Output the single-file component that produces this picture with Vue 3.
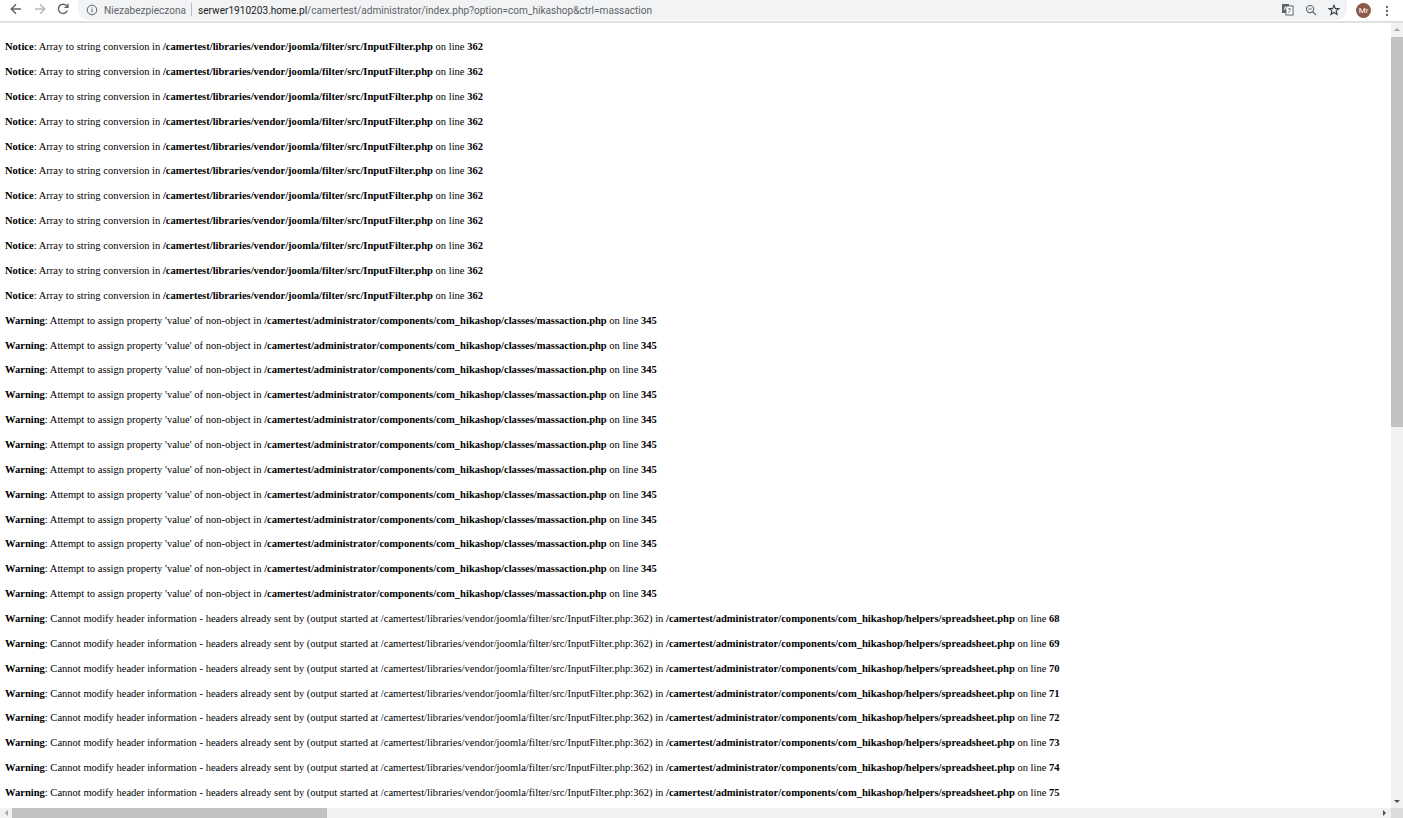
<script setup>
const notices = Array.from({ length: 11 }, (_, i) => i)
const warnings = Array.from({ length: 12 }, (_, i) => i)
const headerLines = [68, 69, 70, 71, 72, 73, 74, 75]
</script>

<template>
  <div class="window">
    <header class="toolbar">
      <div class="nav">
        <svg width="14" height="14" viewBox="0 0 14 14" class="ic"><path d="M12 7H2.5M7 2.2 2.2 7 7 11.8" fill="none" stroke="#5f6368" stroke-width="1.4"/></svg>
        <svg width="14" height="14" viewBox="0 0 14 14" class="ic"><path d="M2 7h9.5M7 2.2 11.8 7 7 11.8" fill="none" stroke="#b4b6b9" stroke-width="1.4"/></svg>
        <svg width="14" height="14" viewBox="0 0 14 14" class="ic"><path d="M11.3 8.6A4.6 4.6 0 1 1 10.6 3.9L12 5.2M12 1.8v3.6H8.4" fill="none" stroke="#5f6368" stroke-width="1.4"/></svg>
      </div>
      <div class="omnibox">
        <svg class="info" width="12" height="12" viewBox="0 0 12 12"><circle cx="6" cy="6" r="4.8" fill="none" stroke="#5f6368" stroke-width="1"/><path d="M6 5.2v3.2M6 3.4v1" stroke="#5f6368" stroke-width="1"/></svg>
        <span class="insecure">Niezabezpieczona</span>
        <span class="sep"></span>
        <span class="url"><span class="host">serwer1910203.home.pl</span>/camertest/administrator/index.php?option=com_hikashop&amp;ctrl=massaction</span>
        <span class="spacer"></span>
        <svg class="omni-ic" width="13" height="13" viewBox="0 0 13 13"><rect x="1" y="1" width="7" height="9" fill="#5f6368"/><rect x="5" y="3" width="7" height="9" fill="#fff" stroke="#5f6368"/><path d="M7 6h3M8.5 5v1M7.3 10l2.4-3" stroke="#5f6368" stroke-width=".8" fill="none"/><path d="M3 7l1.3-3.4L5.5 7" stroke="#fff" stroke-width=".8" fill="none"/></svg>
        <svg class="omni-ic" width="12" height="12" viewBox="0 0 13 13"><circle cx="5.5" cy="5.5" r="3.9" fill="none" stroke="#5f6368" stroke-width="1.2"/><path d="M8.4 8.4 12 12" stroke="#5f6368" stroke-width="1.3"/><path d="M3.6 5.5h3.8" stroke="#5f6368"/></svg>
        <svg class="omni-ic" width="12" height="12" viewBox="0 0 13 13"><path d="M6.5 1.4 8 5h3.8L8.8 7.5l1.1 3.9-3.4-2.2-3.4 2.2 1.1-3.9L1.2 5H5z" fill="none" stroke="#3c4043" stroke-width="1.2"/></svg>
      </div>
      <span class="avatar">Mr</span>
      <svg class="menu" width="4" height="12" viewBox="0 0 4 12"><circle cx="2" cy="2" r="1.15" fill="#5f6368"/><circle cx="2" cy="6" r="1.15" fill="#5f6368"/><circle cx="2" cy="10" r="1.15" fill="#5f6368"/></svg>
    </header>

    <div class="middle">
      <main class="page">
        <div v-for="n in notices" :key="'n' + n" class="line"><b>Notice</b>: Array to string conversion in <b>/camertest/libraries/vendor/joomla/filter/src/InputFilter.php</b> on line <b>362</b></div>
        <div v-for="w in warnings" :key="'w' + w" class="line"><b>Warning</b>: Attempt to assign property 'value' of non-object in <b>/camertest/administrator/components/com_hikashop/classes/massaction.php</b> on line <b>345</b></div>
        <div v-for="l in headerLines" :key="'h' + l" class="line"><b>Warning</b>: Cannot modify header information - headers already sent by (output started at /camertest/libraries/vendor/joomla/filter/src/InputFilter.php:362) in <b>/camertest/administrator/components/com_hikashop/helpers/spreadsheet.php</b> on line <b>{{ l }}</b></div>
      </main>
      <aside class="vscroll">
        <span class="arrow up"></span>
        <span class="vthumb"></span>
        <span class="vrest"></span>
        <span class="arrow down"></span>
      </aside>
    </div>

    <footer class="hbar">
      <div class="hscroll">
        <span class="arrow left"></span>
        <span class="hthumb"></span>
        <span class="hrest"></span>
        <span class="arrow right"></span>
      </div>
      <span class="corner"></span>
    </footer>
  </div>
</template>

<style>
html, body { margin: 0; overflow: hidden; background: #fff; }
</style>

<style scoped>
.window {
  width: 1403px;
  height: 818px;
  display: flex;
  flex-direction: column;
  overflow: hidden;
  background: #fff;
}
.toolbar {
  height: 21px;
  flex: none;
  display: flex;
  align-items: center;
  background: #fff;
  border-bottom: 2px solid #dfe0e1;
  font-family: "Roboto", "Liberation Sans", sans-serif;
  font-size: 10.1px;
  color: #5f6368;
}
.nav {
  display: flex;
  gap: 9.5px;
  padding-left: 9px;
  width: 71px;
  box-sizing: border-box;
  flex: none;
  margin-top: -3px;
}
.omnibox {
  width: 1269px;
  height: 21px;
  margin-top: -2px;
  box-sizing: border-box;
  flex: none;
  display: flex;
  align-items: center;
  background: #f1f3f4;
  border-radius: 0 0 11px 11px;
  padding: 0 0 0 8px;
  margin-left: 7px;
}
.info { margin-right: 6px; flex: none; }
.insecure { white-space: nowrap; width: 83px; flex: none; margin-top: 2px; }
.sep { width: 1px; height: 13px; background: #b9bbbe; margin: 0 6px 0 4px; flex: none; }
.url { white-space: nowrap; margin-top: 2px; }
.host { color: #202124; }
.spacer { flex: 1; }
.omni-ic { margin-right: 11px; flex: none; }
.omni-ic:last-child { margin-right: 7px; }
.avatar {
  width: 15px;
  height: 15px;
  border-radius: 50%;
  background: #8d5a4a;
  color: #fff;
  font-size: 8px;
  text-align: center;
  line-height: 15px;
  margin-left: 9px;
  flex: none;
}
.menu { margin-left: 13.5px; flex: none; }
.middle {
  flex: 1;
  min-height: 0;
  display: flex;
}
.page {
  flex: 1;
  min-width: 0;
  overflow: hidden;
  padding: 12.2px 0 0 5px;
  font-family: "Liberation Serif", serif;
  font-size: 10.54px;
  color: #000;
}
.line {
  height: 24.87px;
  line-height: 24.87px;
  white-space: nowrap;
}
.vscroll {
  width: 12px;
  flex: none;
  display: flex;
  flex-direction: column;
  align-items: center;
  background: #f1f1f1;
}
.vthumb { width: 100%; height: 390px; background: #c1c1c1; flex: none; }
.vrest { flex: 1; }
.arrow { width: 0; height: 0; flex: none; border-style: solid; border-color: transparent; }
.up { border-width: 0 3px 3px; border-bottom-color: #a3a3a3; margin: 5px 0 6px; }
.down { border-width: 3px 3px 0; border-top-color: #505050; margin: 5px 0 5px; }
.hbar {
  height: 10px;
  flex: none;
  display: flex;
}
.hscroll {
  flex: 1;
  display: flex;
  align-items: center;
  background: #f1f1f1;
}
.hthumb { width: 315px; height: 100%; background: #c1c1c1; flex: none; }
.hrest { flex: 1; }
.left { border-width: 3px 3px 3px 0; border-right-color: #a3a3a3; margin: 0 4px 0 5px; }
.right { border-width: 3px 0 3px 3px; border-left-color: #505050; margin: 0 5px 0 0; }
.corner { width: 12px; background: #dcdcdc; flex: none; }
</style>
